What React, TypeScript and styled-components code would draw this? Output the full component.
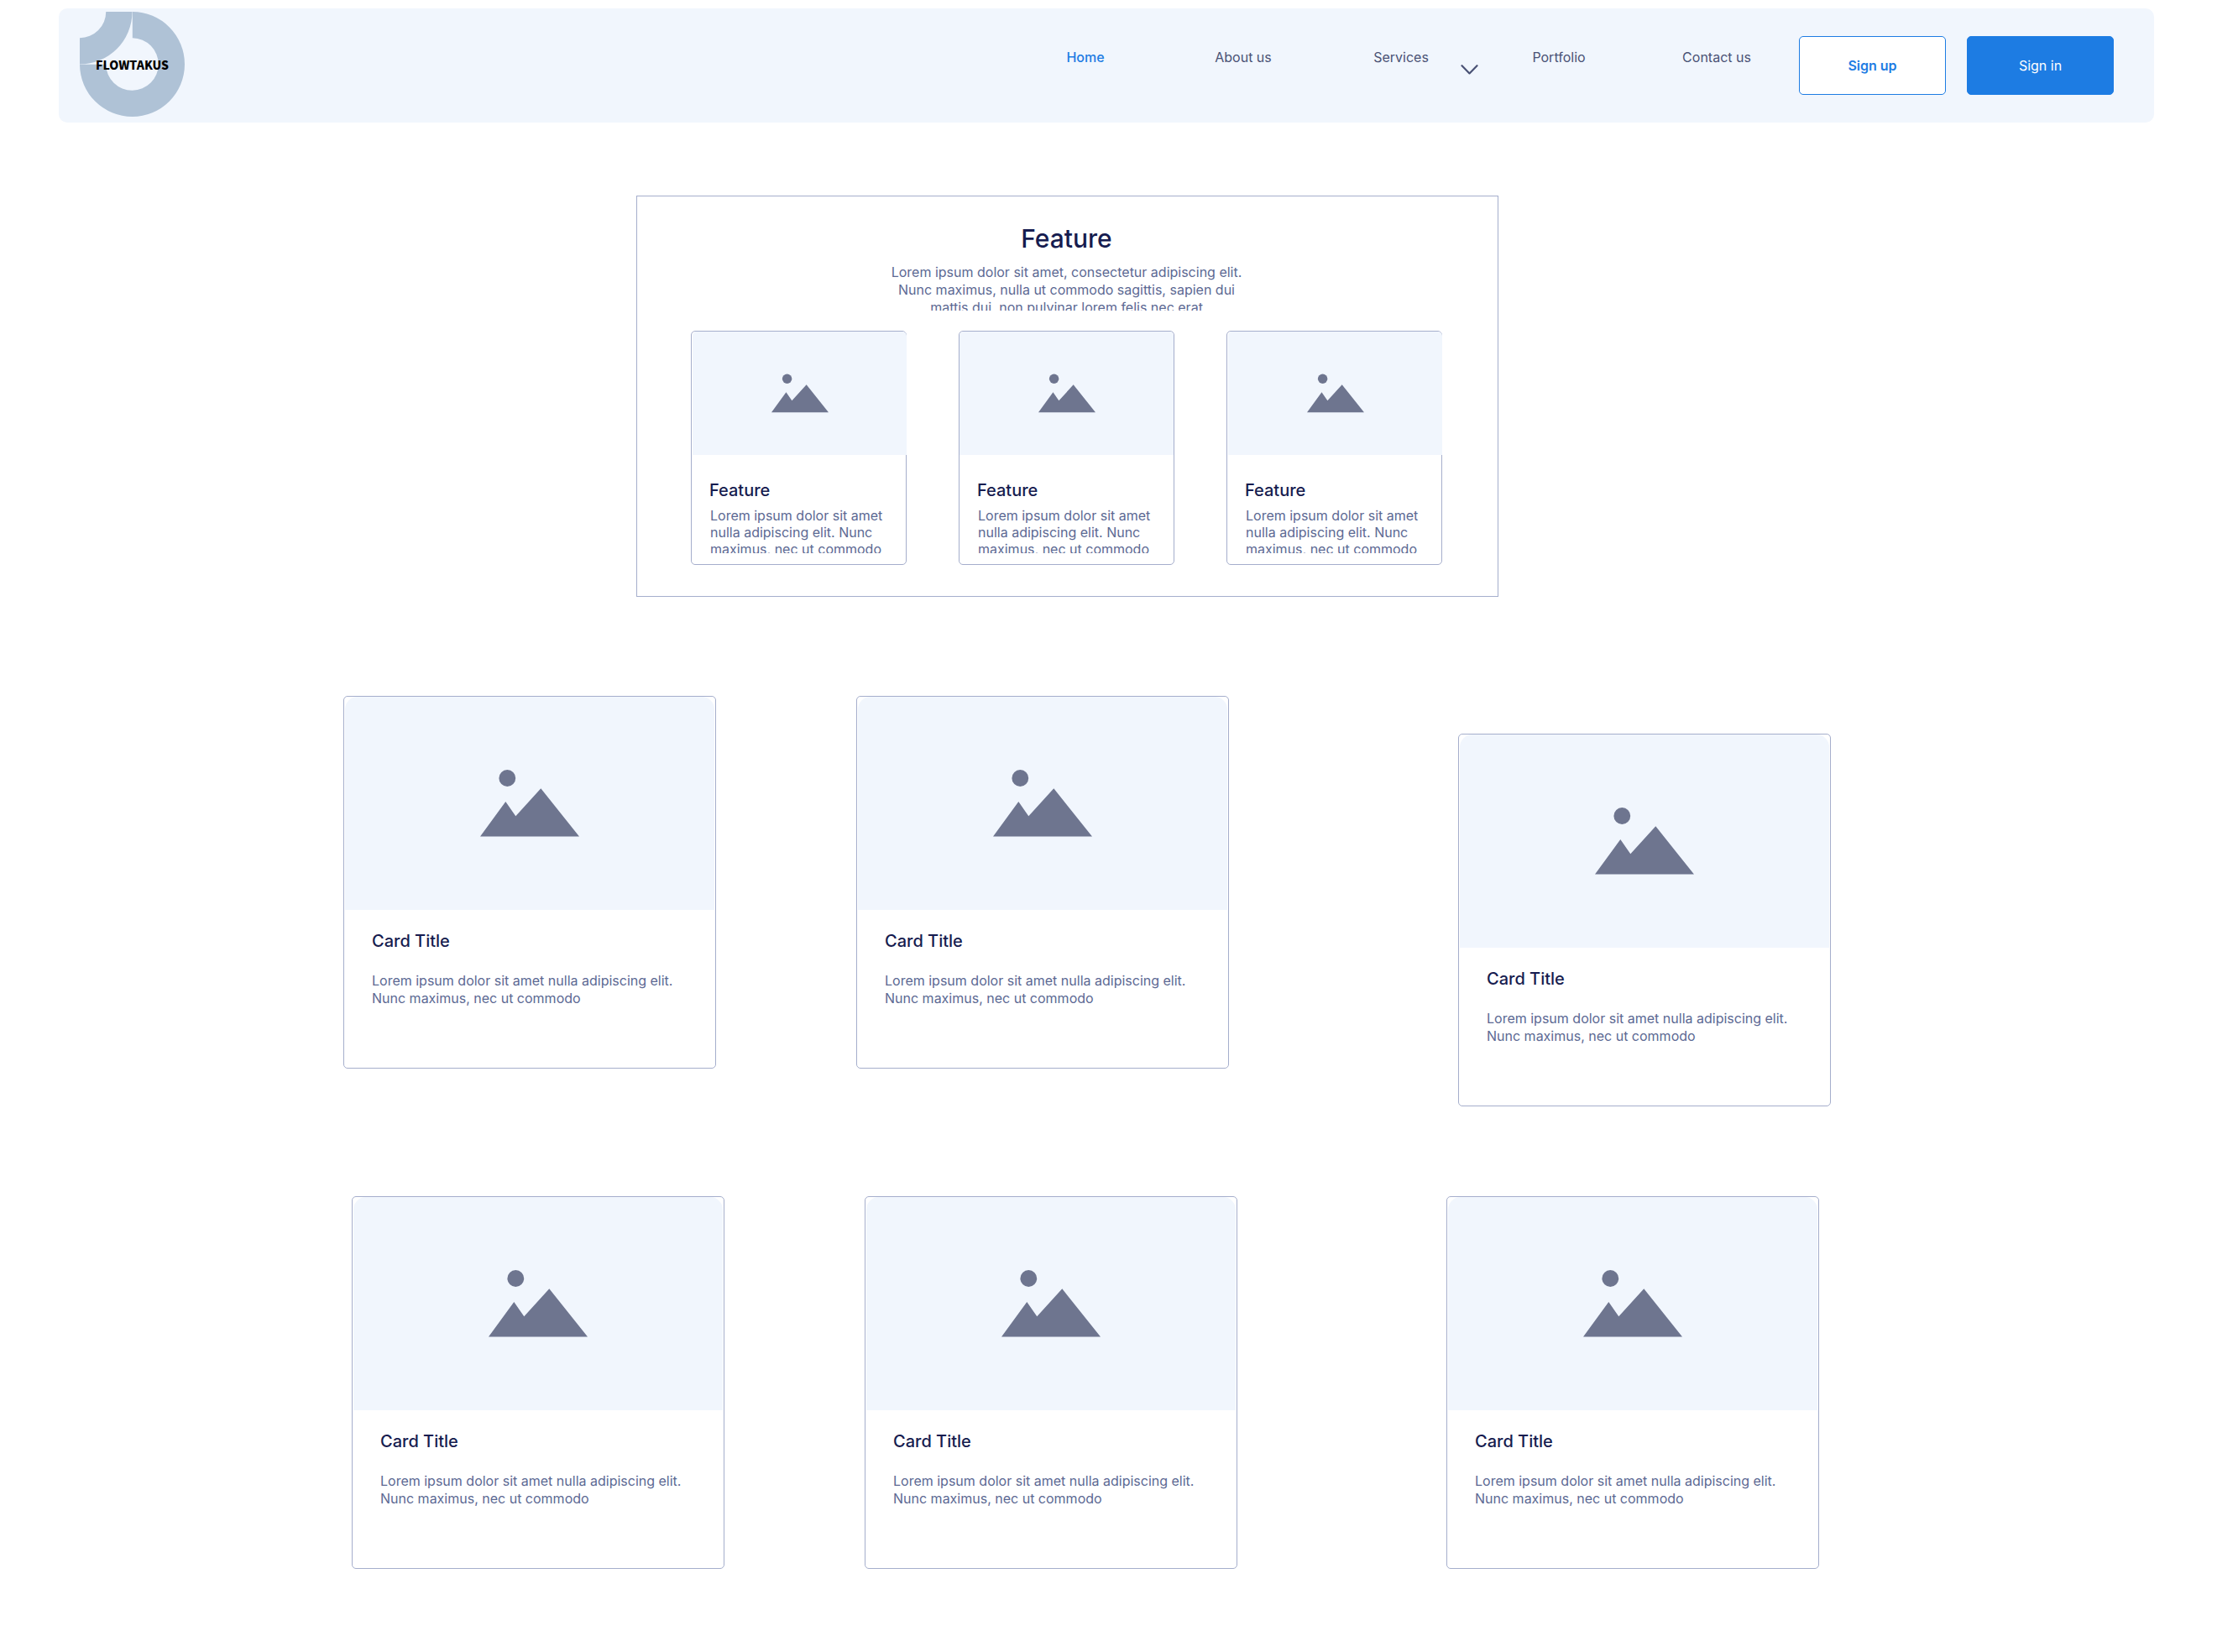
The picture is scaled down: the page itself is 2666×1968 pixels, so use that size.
import React from "react";
import styled, { createGlobalStyle } from "styled-components";

const color = {
  tint: "#f1f6fd",
  line: "#a5aecc",
  ink: "#161c4f",
  text: "#5c6993",
  nav: "#4a5275",
  blue: "#1d7ce3",
  picture: "#6e758f",
  logo: "#afc2d6",
};

const GlobalStyle = createGlobalStyle`
  *, *::before, *::after { box-sizing: border-box; }
  body {
    margin: 0;
    background: #fff;
    color: ${color.ink};
    font-family: Inter, "Liberation Sans", sans-serif;
    font-size: 16px;
  }
  h2, h3, p, ul { margin: 0; padding: 0; }
`;

const Page = styled.div`
  display: flex;
  flex-direction: column;
  padding-bottom: 99px;
`;

const Header = styled.header`
  display: flex;
  align-items: center;
  height: 136px;
  margin: 10px 100px 0 70px;
  padding: 0 48px 0 25px;
  border-radius: 10px;
  background: ${color.tint};
`;

const Brand = styled.a`
  display: grid;
  place-items: center;
  width: 125px;
  height: 125px;
  margin-bottom: 3px;
  text-decoration: none;

  > * { grid-area: 1 / 1; }
`;

const BrandName = styled.span`
  color: #000;
  font-family: "Noto Sans CJK JP", "Noto Sans", sans-serif;
  font-size: 14px;
  font-weight: 900;
  line-height: 20px;
`;

const Nav = styled.nav`
  align-self: flex-start;
  margin: 48px 4px 0 auto;
`;

const NavList = styled.ul`
  display: grid;
  grid-template-columns: repeat(5, 188px);
  list-style: none;
`;

const NavItem = styled.li`
  display: grid;
  grid-template-columns: 1fr auto 1fr;
  align-items: start;
`;

const NavLink = styled.a<{ $active?: boolean }>`
  grid-column: 2;
  color: ${(p) => (p.$active ? color.blue : color.nav)};
  font-weight: ${(p) => (p.$active ? 500 : 400)};
  line-height: 21px;
  text-decoration: none;
`;

const MenuToggle = styled.button`
  justify-self: end;
  display: flex;
  margin: 19px 2px 0 0;
  padding: 0;
  border: 0;
  background: none;
  color: ${color.nav};
  cursor: pointer;
`;

const Actions = styled.div`
  display: flex;
  gap: 25px;
`;

const Button = styled.button<{ $solid?: boolean }>`
  width: 175px;
  height: 70px;
  border: 1px solid ${color.blue};
  border-radius: 5px;
  background: ${(p) => (p.$solid ? color.blue : "#fff")};
  color: ${(p) => (p.$solid ? "#fff" : color.blue)};
  font: ${(p) => (p.$solid ? 400 : 600)} 16px/20px Inter, "Liberation Sans", sans-serif;
  cursor: pointer;
`;

const FeatureBand = styled.section`
  display: flex;
  justify-content: center;
  padding: 87px 123px 0 0;
`;

const FeaturePanel = styled.div`
  display: flex;
  flex-direction: column;
  align-items: center;
  width: 1027px;
  padding: 32px 66px 37px 64px;
  border: 1px solid ${color.line};
`;

const FeatureHeading = styled.h2`
  font-size: 30px;
  font-weight: 500;
  line-height: 36px;
`;

const FeatureIntro = styled.p`
  width: 430px;
  height: 56px;
  margin-top: 12px;
  overflow: hidden;
  color: ${color.text};
  font-weight: 400;
  line-height: 21px;
  text-align: center;
`;

const FeatureList = styled.div`
  display: flex;
  gap: 62px;
  margin-top: 24px;
`;

const FeatureCard = styled.article`
  width: 257px;
  height: 279px;
  border: 1px solid ${color.line};
  border-radius: 5px;
`;

const FeaturePicture = styled.div<{ $inset: boolean }>`
  display: flex;
  align-items: center;
  justify-content: center;
  height: 147px;
  margin: ${(p) => (p.$inset ? "0" : "0 -1px 0 1px")};
  border-radius: 5px 5px 0 0;
  background: ${color.tint};
`;

const FeatureBody = styled.div`
  padding: 30px 20px 0 21px;
`;

const CardTitle = styled.h3`
  font-size: 20px;
  font-weight: 500;
  line-height: 24px;
`;

const FeatureText = styled.p`
  height: 55px;
  margin: 8px 0 0 1px;
  overflow: hidden;
  color: ${color.text};
  font-weight: 400;
  line-height: 20px;
`;

const CardRow = styled.section<{ $width: number; $offset: number; $top: number }>`
  display: flex;
  justify-content: center;
  padding: ${(p) => p.$top}px ${(p) => p.$offset}px 0 0;

  > div { max-width: ${(p) => p.$width}px; }
`;

const CardGrid = styled.div`
  flex: 1;
  display: grid;
  grid-template-columns: 444px 444px 1fr;
  column-gap: 167px;
  align-items: start;
`;

const Card = styled.article<{ $last: boolean; $drop: number }>`
  width: 444px;
  height: 444px;
  margin-top: ${(p) => p.$drop}px;
  justify-self: ${(p) => (p.$last ? "end" : "start")};
  border: 1px solid ${color.line};
  border-radius: 5px;
`;

const CardPicture = styled.div`
  display: flex;
  align-items: center;
  justify-content: center;
  height: 254px;
  margin: 0 1px;
  border-radius: 15px 15px 0 0;
  background: ${color.tint};
`;

const CardBody = styled.div`
  padding: 25px 20px 0 33px;
`;

const CardText = styled.p`
  margin-top: 25px;
  color: ${color.text};
  font-weight: 400;
  line-height: 21px;
`;

const Logo = () => (
  <svg width="125" height="125" viewBox="0 0 125 125" fill={color.logo} aria-hidden="true">
    <path d="M31.250 0H62.5A62.500 62.500 0 0 1 0 62.500V31.250A31.250 31.250 0 0 0 31.250 0Z" />
    <path d="M62.800 0A62.500 62.500 0 1 1 0 62.800H31.250A31.250 31.250 0 1 0 62.800 31.250Z" />
  </svg>
);

const PictureIcon = ({ width, height }: { width: number; height: number }) => (
  <svg width={width} height={height} viewBox="0 0 118 80" fill={color.picture} aria-hidden="true">
    <circle cx="32.300" cy="10" r="9.900" />
    <path d="M0 79.600L30.300 38L42.300 55.300L72.300 22.300L118 79.600Z" />
  </svg>
);

const navItems = ["Home", "About us", "Services", "Portfolio", "Contact us"];
const features = [0, 1, 2];
const rows = [
  { width: 1772, offset: 76, top: 118, drops: [0, 0, 45] },
  { width: 1748, offset: 80, top: 107, drops: [0, 0, 0] },
];

export default function App() {
  return (
    <Page>
      <GlobalStyle />
      <Header>
        <Brand href="#">
          <Logo />
          <BrandName>FLOWTAKUS</BrandName>
        </Brand>
        <Nav>
          <NavList>
            {navItems.map((label) => (
              <NavItem key={label}>
                <NavLink href="#" $active={label === "Home"}>{label}</NavLink>
                {label === "Services" && (
                  <MenuToggle type="button" aria-label="Open services menu">
                    <svg width="21" height="12" viewBox="0 0 21 12" fill="none" stroke="currentColor" strokeWidth="2.200" strokeLinecap="round" strokeLinejoin="round">
                      <path d="M1.500 1.200L10.500 10.400L19.500 1.200" />
                    </svg>
                  </MenuToggle>
                )}
              </NavItem>
            ))}
          </NavList>
        </Nav>
        <Actions>
          <Button type="button">Sign up</Button>
          <Button type="button" $solid>Sign in</Button>
        </Actions>
      </Header>
      <main>
        <FeatureBand>
          <FeaturePanel>
            <FeatureHeading>Feature</FeatureHeading>
            <FeatureIntro>
              Lorem ipsum dolor sit amet, consectetur adipiscing elit. Nunc maximus, nulla ut commodo sagittis, sapien dui mattis dui, non pulvinar lorem felis nec erat
            </FeatureIntro>
            <FeatureList>
              {features.map((n) => (
                <FeatureCard key={n}>
                  <FeaturePicture $inset={n === 1}>
                    <PictureIcon width={68} height={47} />
                  </FeaturePicture>
                  <FeatureBody>
                    <CardTitle>Feature</CardTitle>
                    <FeatureText>Lorem ipsum dolor sit amet nulla adipiscing elit. Nunc maximus, nec ut commodo</FeatureText>
                  </FeatureBody>
                </FeatureCard>
              ))}
            </FeatureList>
          </FeaturePanel>
        </FeatureBand>
        {rows.map((row) => (
          <CardRow key={row.width} $width={row.width} $offset={row.offset} $top={row.top}>
            <CardGrid>
              {row.drops.map((drop, i) => (
                <Card key={i} $last={i === 2} $drop={drop}>
                  <CardPicture>
                    <PictureIcon width={118} height={80} />
                  </CardPicture>
                  <CardBody>
                    <CardTitle>Card Title</CardTitle>
                    <CardText>Lorem ipsum dolor sit amet nulla adipiscing elit. Nunc maximus, nec ut commodo</CardText>
                  </CardBody>
                </Card>
              ))}
            </CardGrid>
          </CardRow>
        ))}
      </main>
    </Page>
  );
}
